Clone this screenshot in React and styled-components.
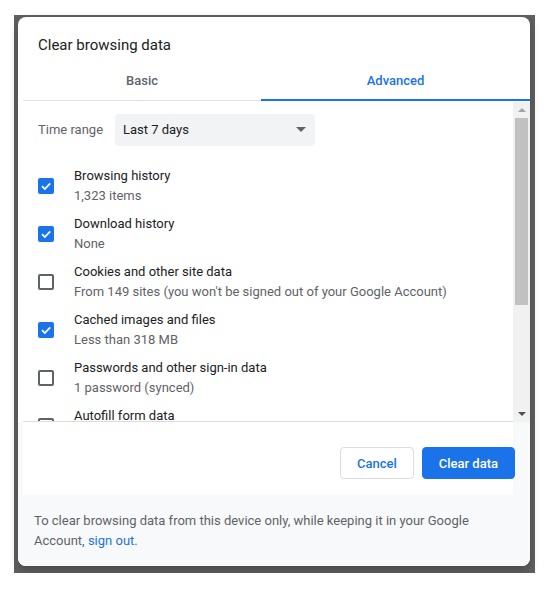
import React, { useState } from 'react';
import styled, { createGlobalStyle } from 'styled-components';

const GlobalStyle = createGlobalStyle`
  html, body {
    margin: 0;
    padding: 0;
    background: #ffffff;
    font-family: Roboto, "Liberation Sans", Arial, sans-serif;
  }
`;

const Page = styled.div`
  padding: 15px 0 0 14px;
`;

const Backdrop = styled.div`
  width: 521px;
  height: 558px;
  background: #606060;
  padding: 2px 0 0 4px;
  box-sizing: border-box;
`;

const Dialog = styled.div`
  width: 512px;
  height: 549px;
  background: #ffffff;
  border-radius: 8px;
  box-shadow: 0 4px 10px rgba(0, 0, 0, 0.25);
  display: flex;
  flex-direction: column;
  overflow: hidden;
`;

const Title = styled.div`
  padding: 18px 20px 0 20px;
  height: 26px;
  font-size: 15px;
  line-height: 20px;
  color: #202124;
`;

const Tabs = styled.div`
  display: flex;
  margin-left: 5px;
  border-bottom: 1px solid #e0e0e0;
`;

const Tab = styled.div`
  flex: ${(p) => (p.$width ? `0 0 ${p.$width}px` : '1')};
  height: 40px;
  box-sizing: border-box;
  display: flex;
  align-items: center;
  justify-content: center;
  font-size: 13px;
  font-weight: 500;
  cursor: pointer;
  color: ${(p) => (p.$active ? '#1a73e8' : '#5f6368')};
  border-bottom: 2px solid ${(p) => (p.$active ? '#1a73e8' : 'transparent')};
  margin-bottom: -1px;
  padding-top: 1px;
`;

const Body = styled.div`
  display: flex;
  height: 320px;
  margin-left: 5px;
  margin-top: 1px;
`;

const Content = styled.div`
  flex: 1;
  overflow: hidden;
  padding: 12px 0 0 15px;
  border-bottom: 1px solid #dadce0;
`;

const TimeRow = styled.div`
  display: flex;
  align-items: center;
  height: 32px;
  margin-bottom: 16px;
`;

const TimeLabel = styled.span`
  font-size: 13px;
  color: #5f6368;
  width: 77px;
  margin-top: -1px;
`;

const Select = styled.div`
  width: 200px;
  height: 32px;
  box-sizing: border-box;
  background: #f1f3f4;
  border-radius: 4px;
  display: flex;
  align-items: center;
  justify-content: space-between;
  padding: 0 9px 2px 8px;
  font-size: 13px;
  color: #202124;
`;

const Caret = styled.span`
  width: 0;
  height: 0;
  border-left: 5px solid transparent;
  border-right: 5px solid transparent;
  border-top: 5px solid #5f6368;
`;

const Item = styled.label`
  display: flex;
  align-items: center;
  height: 48px;
  flex-shrink: 0;
  cursor: pointer;
`;

const Box = styled.span`
  width: 16px;
  height: 16px;
  box-sizing: border-box;
  border-radius: 2px;
  flex-shrink: 0;
  margin-right: 20px;
  display: flex;
  align-items: center;
  justify-content: center;
  background: ${(p) => (p.$checked ? '#1a73e8' : 'transparent')};
  border: ${(p) => (p.$checked ? 'none' : '2px solid #5f6368')};
`;

const ItemText = styled.div`
  display: flex;
  flex-direction: column;
  min-height: 40px;
`;

const ItemLabel = styled.span`
  font-size: 13px;
  line-height: 20px;
  color: #202124;
`;

const ItemSub = styled.span`
  font-size: 13px;
  line-height: 20px;
  min-height: 20px;
  color: #5f6368;
`;

const Scrollbar = styled.div`
  width: 17px;
  background: #f1f1f1;
  display: flex;
  flex-direction: column;
  align-items: center;
`;

const ScrollArrow = styled.div`
  height: 16px;
  width: 100%;
  display: flex;
  align-items: center;
  justify-content: center;
  &::after {
    content: '';
    border-left: 4px solid transparent;
    border-right: 4px solid transparent;
    ${(p) =>
      p.$down
        ? 'border-top: 4px solid #505050;'
        : 'border-bottom: 4px solid #a3a3a3;'}
  }
`;

const Thumb = styled.div`
  width: 13px;
  height: 187px;
  background: #c1c1c1;
`;

const ScrollTrack = styled.div`
  flex: 1;
  display: flex;
  flex-direction: column;
  align-items: center;
`;

const Lower = styled.div`
  flex: 1;
  display: flex;
  flex-direction: column;
  background: #f8f9fa;
`;

const Actions = styled.div`
  height: 72px;
  margin: 0 17px 0 5px;
  background: #ffffff;
  display: flex;
  align-items: flex-end;
  justify-content: flex-end;
  gap: 9px;
  padding-bottom: 15px;
  box-sizing: border-box;
`;

const Button = styled.button`
  height: 32px;
  padding: 0 16px;
  border-radius: 4px;
  font-family: Roboto, "Liberation Sans", Arial, sans-serif;
  font-size: 13px;
  font-weight: 500;
  cursor: pointer;
  border: 1px solid ${(p) => (p.$primary ? '#1a73e8' : '#dadce0')};
  background: ${(p) => (p.$primary ? '#1a73e8' : '#ffffff')};
  color: ${(p) => (p.$primary ? '#ffffff' : '#1a73e8')};
  margin-right: ${(p) => (p.$primary ? '-2px' : '-1px')};
`;

const Footer = styled.div`
  padding: 17px 16px 0 16px;
  font-size: 13px;
  line-height: 20px;
  color: #5f6368;
`;

const Link = styled.a`
  color: #1a73e8;
  text-decoration: none;
`;

const items = [
  { label: 'Browsing history', sub: '1,323 items', checked: true },
  { label: 'Download history', sub: 'None', checked: true },
  {
    label: 'Cookies and other site data',
    sub: "From 149 sites (you won't be signed out of your Google Account)",
    checked: false,
  },
  { label: 'Cached images and files', sub: 'Less than 318 MB', checked: true },
  { label: 'Passwords and other sign-in data', sub: '1 password (synced)', checked: false },
  { label: 'Autofill form data', sub: '', checked: false },
];

function Check() {
  return (
    <svg width="12" height="12" viewBox="0 0 12 12">
      <path d="M2 6.2 L4.8 9 L10.2 3.4" fill="none" stroke="#ffffff" strokeWidth="1.8" />
    </svg>
  );
}

export default function App() {
  const [tab, setTab] = useState('advanced');
  const [checks, setChecks] = useState(items.map((i) => i.checked));

  const toggle = (idx) => {
    setChecks(checks.map((c, i) => (i === idx ? !c : c)));
  };

  return (
    <>
      <GlobalStyle />
      <Page>
        <Backdrop>
          <Dialog>
            <Title>Clear browsing data</Title>
            <Tabs>
              <Tab $width={238} $active={tab === 'basic'} onClick={() => setTab('basic')}>
                Basic
              </Tab>
              <Tab $active={tab === 'advanced'} onClick={() => setTab('advanced')}>
                Advanced
              </Tab>
            </Tabs>
            <Body>
              <Content>
                <TimeRow>
                  <TimeLabel>Time range</TimeLabel>
                  <Select>
                    Last 7 days
                    <Caret />
                  </Select>
                </TimeRow>
                {items.map((item, i) => (
                  <Item key={item.label} onClick={() => toggle(i)}>
                    <Box $checked={checks[i]}>{checks[i] && <Check />}</Box>
                    <ItemText>
                      <ItemLabel>{item.label}</ItemLabel>
                      <ItemSub>{item.sub}</ItemSub>
                    </ItemText>
                  </Item>
                ))}
              </Content>
              <Scrollbar>
                <ScrollArrow />
                <ScrollTrack>
                  <Thumb />
                </ScrollTrack>
                <ScrollArrow $down />
              </Scrollbar>
            </Body>
            <Lower>
              <Actions>
                <Button>Cancel</Button>
                <Button $primary>Clear data</Button>
              </Actions>
              <Footer>
                To clear browsing data from this device only, while keeping it in your Google
                Account, <Link href="#">sign out</Link>.
              </Footer>
            </Lower>
          </Dialog>
        </Backdrop>
      </Page>
    </>
  );
}
